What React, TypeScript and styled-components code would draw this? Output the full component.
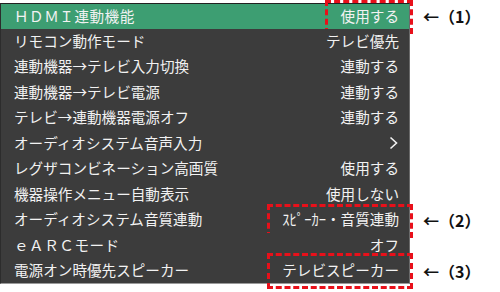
import * as React from 'react';
import styled, { createGlobalStyle } from 'styled-components';

const GlobalStyle = createGlobalStyle`
  html, body {
    margin: 0;
    padding: 0;
    background: #ffffff;
  }
  body {
    font-family: "Noto Sans CJK JP", "Noto Sans", sans-serif;
  }
`;

const Page = styled.div`
  width: 500px;
  height: 292px;
  overflow: hidden;
  padding-top: 3px;
  box-sizing: border-box;
  display: flex;
  flex-direction: column;
`;

const Line = styled.div`
  display: grid;
  grid-template-columns: 410px 1fr;
  height: 25.5px;
`;

const MenuItem = styled.div<{ $active?: boolean; $first?: boolean; $last?: boolean }>`
  position: relative;
  display: flex;
  align-items: center;
  justify-content: space-between;
  padding: 0 10px 0 13px;
  background: ${p => (p.$active ? '#3d9e72' : '#3c3c3c')};
  border-left: 1px solid #2c2c2c;
  border-right: 1px solid #6a6a6a;
  border-top: ${p => (p.$first ? '1px solid #222' : 'none')};
  border-bottom: ${p => (p.$last ? '1px solid #9a9a9a' : 'none')};
  color: #f2f2f2;
  font-size: 14.6px;
  line-height: 1;
  white-space: nowrap;
`;

const Label = styled.span<{ $wide?: boolean }>`
  letter-spacing: ${p => (p.$wide ? '0.5px' : '0')};
`;

const Value = styled.span`
  display: flex;
  align-items: center;
  text-align: right;
`;

const Mark = styled.div<{ $left: number; $top: number; $bottom: number }>`
  position: absolute;
  left: ${p => p.$left}px;
  right: -4px;
  top: ${p => p.$top}px;
  bottom: ${p => p.$bottom}px;
  border: 3px dashed #e8101a;
  pointer-events: none;
`;

const Note = styled.div`
  display: flex;
  align-items: center;
  padding-left: 13px;
  font-family: "Noto Sans CJK JP", sans-serif;
  font-weight: bold;
  font-size: 16px;
  color: #111;
  white-space: nowrap;
`;

function Chevron() {
  return (
    <svg width="9" height="14" viewBox="0 0 9 14" style={{ marginRight: 1 }}>
      <path d="M1.5 1.5 L7.5 7 L1.5 12.5" fill="none" stroke="#f2f2f2" strokeWidth="1.6" />
    </svg>
  );
}

interface Entry {
  label: string;
  value: React.ReactNode;
  wide?: boolean;
  note?: string;
  mark?: { left: number; top: number; bottom: number };
}

const entries: Entry[] = [
  { label: 'ＨＤＭＩ連動機能', value: '使用する', wide: true, note: '←（1）', mark: { left: 324, top: -4, bottom: -5 } },
  { label: 'リモコン動作モード', value: 'テレビ優先' },
  { label: '連動機器→テレビ入力切換', value: '連動する' },
  { label: '連動機器→テレビ電源', value: '連動する' },
  { label: 'テレビ→連動機器電源オフ', value: '連動する' },
  { label: 'オーディオシステム音声入力', value: <Chevron /> },
  { label: 'レグザコンビネーション高画質', value: '使用する' },
  { label: '機器操作メニュー自動表示', value: '使用しない' },
  { label: 'オーディオシステム音質連動', value: 'ｽﾋﾟｰｶｰ・音質連動', note: '←（2）', mark: { left: 266, top: -3, bottom: -5 } },
  { label: 'ｅＡＲＣモード', value: 'オフ', wide: true },
  { label: '電源オン時優先スピーカー', value: 'テレビスピーカー', note: '←（3）', mark: { left: 266, top: -5, bottom: -6 } },
];

export default function App() {
  return (
    <>
      <GlobalStyle />
      <Page>
        {entries.map((e, i) => (
          <Line key={e.label}>
            <MenuItem $active={i === 0} $first={i === 0} $last={i === entries.length - 1}>
              <Label $wide={e.wide}>{e.label}</Label>
              <Value>{e.value}</Value>
              {e.mark && <Mark $left={e.mark.left} $top={e.mark.top} $bottom={e.mark.bottom} />}
            </MenuItem>
            <Note>{e.note}</Note>
          </Line>
        ))}
      </Page>
    </>
  );
}
